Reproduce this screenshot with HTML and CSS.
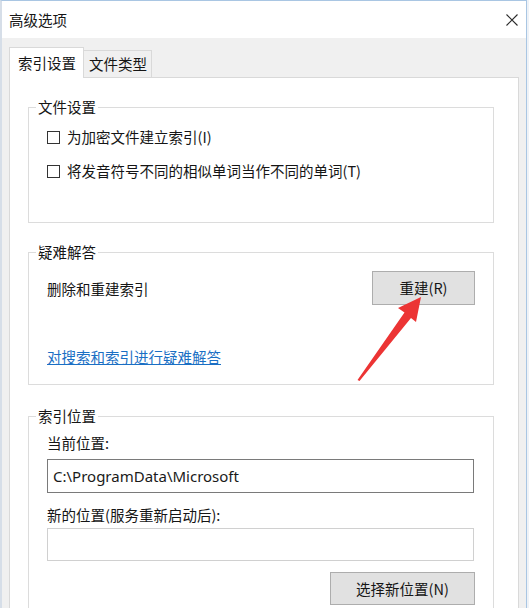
FILE: index.html
```
<!DOCTYPE html>
<html lang="zh-CN">
<head>
<meta charset="utf-8">
<title>高级选项</title>
<link rel="stylesheet" href="styles.css">
</head>
<body>
<div class="window">
  <div class="titlebar">
    <span class="title">高级选项</span>
    <span class="close" aria-label="关闭">
      <svg width="12" height="12" viewBox="0 0 12 12"><path d="M0.5 0.5L11.5 11.5M11.5 0.5L0.5 11.5" stroke="#2b2b2b" stroke-width="1.1" fill="none"/></svg>
    </span>
  </div>
  <div class="client">
    <div class="tabs">
      <div class="tab active">索引设置</div>
      <div class="tab">文件类型</div>
    </div>
    <div class="panel">
      <fieldset class="group g1">
        <legend>文件设置</legend>
        <div class="gbody checks">
          <div class="check"><span class="box"></span><span>为加密文件建立索引(I)</span></div>
          <div class="check"><span class="box"></span><span>将发音符号不同的相似单词当作不同的单词(T)</span></div>
        </div>
      </fieldset>
      <fieldset class="group g2">
        <legend>疑难解答</legend>
        <div class="gbody">
          <div class="row">
            <span>删除和重建索引</span>
            <span class="btn rebuild">重建(R)</span>
          </div>
          <a class="link" href="#">对搜索和索引进行疑难解答</a>
        </div>
      </fieldset>
      <fieldset class="group g3">
        <legend>索引位置</legend>
        <div class="gbody">
          <div class="label">当前位置:</div>
          <div class="field current">C:\ProgramData\Microsoft</div>
          <div class="label second">新的位置(服务重新启动后):</div>
          <div class="field empty"></div>
          <div class="btnrow"><span class="btn choose">选择新位置(N)</span></div>
        </div>
      </fieldset>
    </div>
  </div>
</div>
<svg class="arrow" width="529" height="608" viewBox="0 0 529 608">
  <polygon points="421,297 416,322 411,318 359.5,381 357.5,380 404.5,312.5 398,308" fill="#ec3434"/>
</svg>
</body>
</html>
```
FILE: styles.css
```
* { box-sizing: border-box; }
html, body { margin: 0; padding: 0; }
body {
  position: relative;
  width: 529px;
  height: 608px;
  overflow: hidden;
  background: #eef2f7;
  font-family: "Noto Sans CJK SC", "Microsoft YaHei", sans-serif;
  font-size: 14.5px;
  color: #151515;
}
.window {
  width: 527px;
  height: 608px;
  border-top: 1px solid #a9c6e3;
  border-left: 2px solid #d6dee8;
  border-right: 1px solid #a9c6e3;
  background: #f0f0f0;
  display: flex;
  flex-direction: column;
}
.titlebar {
  height: 37px;
  flex: none;
  background: #ffffff;
  display: flex;
  align-items: center;
  justify-content: space-between;
  padding: 0 8px 0 7px;
  line-height: 20px;
}
.close { display: flex; width: 12px; height: 12px; margin-right: 0; }
.client {
  flex: 1;
  display: flex;
  flex-direction: column;
  padding: 9px 0 0 7px;
}
.tabs {
  display: flex;
  align-items: flex-end;
  height: 30px;
}
.tab {
  display: flex;
  align-items: center;
  line-height: 20px;
}
.tab.active {
  position: relative;
  z-index: 1;
  width: 75px;
  height: 31px;
  margin-bottom: -1px;
  padding-left: 8px;
  background: #ffffff;
  border: 1px solid #d9d9d9;
  border-bottom: none;
}
.tab:not(.active) {
  width: 68px;
  height: 27px;
  padding-left: 5px;
  background: #f0f0f0;
  border: 1px solid #d9d9d9;
  border-left: none;
  border-bottom: none;
}
.panel {
  flex: 1;
  width: 510px;
  background: #ffffff;
  border: 1px solid #d9d9d9;
  padding: 20px 0 0 18px;
}
.group {
  width: 466px;
  margin: 0;
  padding: 0 7px;
  border: 1px solid #dcdcdc;
  min-width: 0;
}
.group legend {
  padding: 0 2px;
  line-height: 18px;
  height: 18px;
}
.gbody { padding: 0 11px; }
.g1 .gbody { padding-top: 11px; padding-bottom: 41px; }
.g2 { margin-top: 20px; }
.g2 .gbody { padding-top: 10px; padding-bottom: 17px; }
.g3 { margin-top: 22px; }
.g3 .gbody { padding-top: 8px; padding-bottom: 20px; }
.checks { display: flex; flex-direction: column; gap: 14px; }
.check {
  display: flex;
  align-items: center;
  gap: 7px;
  height: 20px;
  line-height: 20px;
}
.box {
  width: 13px;
  height: 13px;
  border: 1px solid #333333;
  background: #ffffff;
  flex: none;
}
.row {
  display: flex;
  align-items: center;
  justify-content: space-between;
  height: 34px;
}
.btn {
  display: flex;
  align-items: center;
  justify-content: center;
  background: #e1e1e1;
  border: 1px solid #adadad;
  line-height: 20px;
}
.rebuild { width: 103px; height: 34px; }
.link {
  display: block;
  margin-top: 42px;
  line-height: 20px;
  color: #1a6fc4;
  text-decoration: underline;
  width: max-content;
}
.label { line-height: 20px; }
.label.second { margin-top: 12px; }
.field {
  width: 427px;
  background: #ffffff;
  border: 1px solid #7a7a7a;
  padding-left: 5px;
  display: flex;
  align-items: center;
}
.field.current {
  height: 34px;
  margin-top: 6px;
  font-family: "Noto Sans", "Open Sans", sans-serif;
  font-size: 15px;
  color: #1a1a1a;
}
.field.empty {
  height: 33px;
  margin-top: 3px;
  border-color: #d0d0d0;
}
.btnrow { display: flex; justify-content: flex-end; margin-top: 11px; }
.choose { width: 145px; height: 33px; }
.arrow {
  position: absolute;
  left: 0;
  top: 0;
  pointer-events: none;
}
```
